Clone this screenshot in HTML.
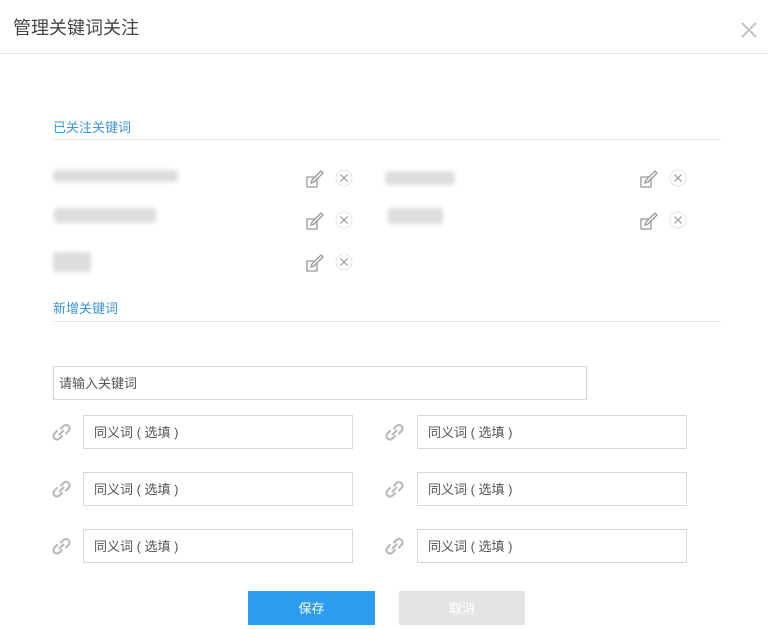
<!DOCTYPE html>
<html><head><meta charset="utf-8"><style>
*{margin:0;padding:0;box-sizing:border-box}
body{width:768px;height:629px;background:#fff;font-family:"Liberation Sans","Noto Sans CJK SC",sans-serif;position:relative;overflow:hidden}
.a{position:absolute}
.t{left:13px;top:14px;font-size:18px;color:#444}
.hl{left:0;top:53px;width:768px;height:1px;background:#e6e6e6}
.sec{font-size:13px;color:#3a95dd;left:53px}
.ln{left:53px;width:668px;height:1px;background:#e2e2e2}
.blur{background:#ddd;filter:blur(2px);border-radius:3px}
.inp{border:1px solid #d8d8d8;height:34px;font-size:13px;color:#555;padding-left:10px;line-height:34px}
.btn{height:34px;top:591px;font-size:13px;color:#fff;text-align:center;line-height:35px}
</style></head><body>
<div class="a t">管理关键词关注</div>
<svg class="a" style="left:740px;top:21px" width="18" height="18"><path d="M2 2L16 16M16 2L2 16" stroke="#c4c4c4" stroke-width="2"/></svg>
<div class="a hl"></div>
<div class="a sec" style="top:117px">已关注关键词</div>
<div class="a ln" style="top:139px"></div>

<div class="a blur" style="left:53px;top:170px;width:125px;height:12px"></div>
<div class="a blur" style="left:385px;top:171px;width:70px;height:14px"></div>
<div class="a blur" style="left:54px;top:208px;width:102px;height:15px"></div>
<div class="a blur" style="left:388px;top:208px;width:55px;height:16px"></div>
<div class="a blur" style="left:53px;top:252px;width:38px;height:20px"></div>

<svg width="0" height="0" style="position:absolute"><defs>
<g id="ed"><path d="M12 9v9H2V8h8" fill="none" stroke="#999" stroke-width="1.3"/><path d="M6 14l1-3 9-9 2 2-9 9z" fill="none" stroke="#999" stroke-width="1.3"/></g>
<g id="cx"><circle cx="9" cy="9" r="8" fill="none" stroke="#e6e6e6"/><path d="M5.5 5.5l7 7M12.5 5.5l-7 7" stroke="#999" stroke-width="1.2"/></g>
<g id="lk"><path d="M9 5.5l2.5-2.5a3.5 3.5 0 0 1 5 5L14 10.5M10 13l-2.5 2.5a3.5 3.5 0 0 1-5-5L5 8M7.5 11.5l4-4" fill="none" stroke="#bbb" stroke-width="2.2" stroke-linecap="round"/></g>
</defs></svg>

<svg class="a" style="left:305px;top:169px" width="50" height="20"><use href="#ed"/><use href="#cx" x="30" y="0"/></svg>
<svg class="a" style="left:639px;top:169px" width="50" height="20"><use href="#ed"/><use href="#cx" x="30" y="0"/></svg>
<svg class="a" style="left:305px;top:211px" width="50" height="20"><use href="#ed"/><use href="#cx" x="30" y="0"/></svg>
<svg class="a" style="left:639px;top:211px" width="50" height="20"><use href="#ed"/><use href="#cx" x="30" y="0"/></svg>
<svg class="a" style="left:305px;top:253px" width="50" height="20"><use href="#ed"/><use href="#cx" x="30" y="0"/></svg>

<div class="a sec" style="top:298px">新增关键词</div>
<div class="a ln" style="top:321px"></div>

<div class="a inp" style="left:53px;top:366px;width:534px;padding-left:5px">请输入关键词</div>

<svg class="a" style="left:52px;top:423px" width="20" height="20"><use href="#lk"/></svg>
<div class="a inp" style="left:83px;top:415px;width:270px">同义词 ( 选填 )</div>
<svg class="a" style="left:385px;top:423px" width="20" height="20"><use href="#lk"/></svg>
<div class="a inp" style="left:417px;top:415px;width:270px">同义词 ( 选填 )</div>
<svg class="a" style="left:52px;top:480px" width="20" height="20"><use href="#lk"/></svg>
<div class="a inp" style="left:83px;top:472px;width:270px">同义词 ( 选填 )</div>
<svg class="a" style="left:385px;top:480px" width="20" height="20"><use href="#lk"/></svg>
<div class="a inp" style="left:417px;top:472px;width:270px">同义词 ( 选填 )</div>
<svg class="a" style="left:52px;top:537px" width="20" height="20"><use href="#lk"/></svg>
<div class="a inp" style="left:83px;top:529px;width:270px">同义词 ( 选填 )</div>
<svg class="a" style="left:385px;top:537px" width="20" height="20"><use href="#lk"/></svg>
<div class="a inp" style="left:417px;top:529px;width:270px">同义词 ( 选填 )</div>

<div class="a btn" style="left:248px;width:127px;background:#2a9df0">保存</div>
<div class="a btn" style="left:399px;width:126px;background:#e4e4e4">取消</div>
</body></html>
